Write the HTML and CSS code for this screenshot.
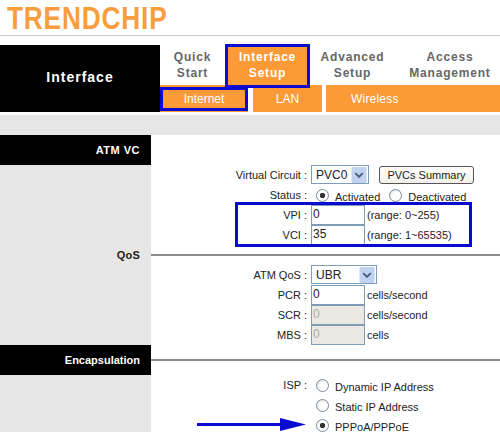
FILE: index.html
```html
<!DOCTYPE html>
<html lang="en">
<head>
  <meta charset="UTF-8">
  <title>TrendChip - Interface Setup</title>
  <link rel="stylesheet" href="styles.css">
</head>
<body>
  <div class="logo"><span class="logo-text">TRENDCHIP</span></div>

  <div class="header">
    <div class="brand">Interface</div>
    <div class="menu">
      <div class="tabs">
        <div class="tab tab-quick">Quick<br>Start</div>
        <div class="tab tab-on">Interface<br>Setup</div>
        <div class="tab tab-adv">Advanced<br>Setup</div>
        <div class="tab tab-access">Access<br>Management</div>
      </div>
      <div class="subtabs">
        <div class="sub sub-on">Internet</div>
        <div class="sub sub-lan">LAN</div>
        <div class="sub sub-wireless">Wireless</div>
      </div>
    </div>
  </div>

  <div class="band"></div>

  <form class="form">
    <div class="row head">
      <div class="side black atm">ATM VC</div>
      <div class="main"></div>
    </div>
    <div class="row">
      <div class="side"></div>
      <div class="label">Virtual Circuit :</div>
      <div class="ctl">
        <div class="select select-pvc">PVC0 <svg class="arrow" viewBox="0 0 16 17"><rect width="16" height="17" rx="1" fill="#c1d2ee"/><path d="M4 6.500l4 4 4-4" fill="none" stroke="#4d6185" stroke-width="2.200"/></svg></div>
        <button type="button" class="btn">PVCs Summary</button>
      </div>
    </div>
    <div class="row">
      <div class="side"></div>
      <div class="label">Status :</div>
      <div class="ctl">
        <input type="radio" class="radio" name="status" checked>
        <span class="opt">Activated</span>
        <input type="radio" class="radio radio-2" name="status">
        <span class="opt">Deactivated</span>
      </div>
    </div>
    <div class="row">
      <div class="side"></div>
      <div class="label">VPI :</div>
      <div class="ctl"><input type="text" class="field" value="0"><span class="unit">(range: 0~255)</span></div>
    </div>
    <div class="row">
      <div class="side"></div>
      <div class="label">VCI :</div>
      <div class="ctl"><input type="text" class="field" value="35"><span class="unit">(range: 1~65535)</span></div>
    </div>

    <div class="row">
      <div class="side qos">QoS</div>
      <div class="main"><div class="rule"></div></div>
    </div>
    <div class="row">
      <div class="side"></div>
      <div class="label">ATM QoS :</div>
      <div class="ctl">
        <div class="select select-qos">UBR <svg class="arrow" viewBox="0 0 16 17"><rect width="16" height="17" rx="1" fill="#c1d2ee"/><path d="M4 6.500l4 4 4-4" fill="none" stroke="#4d6185" stroke-width="2.200"/></svg></div>
      </div>
    </div>
    <div class="row">
      <div class="side"></div>
      <div class="label">PCR :</div>
      <div class="ctl"><input type="text" class="field" value="0"><span class="unit">cells/second</span></div>
    </div>
    <div class="row">
      <div class="side"></div>
      <div class="label">SCR :</div>
      <div class="ctl"><input type="text" class="field" value="0" disabled><span class="unit">cells/second</span></div>
    </div>
    <div class="row">
      <div class="side"></div>
      <div class="label">MBS :</div>
      <div class="ctl"><input type="text" class="field" value="0" disabled><span class="unit">cells</span></div>
    </div>

    <div class="row head">
      <div class="side black">Encapsulation</div>
      <div class="main"><div class="rule"></div></div>
    </div>
    <div class="row">
      <div class="side"></div>
      <div class="label">ISP :</div>
      <div class="ctl"><input type="radio" class="radio" name="isp"><span class="opt">Dynamic IP Address</span></div>
    </div>
    <div class="row">
      <div class="side"></div>
      <div class="label"></div>
      <div class="ctl"><input type="radio" class="radio" name="isp"><span class="opt">Static IP Address</span></div>
    </div>
    <div class="row">
      <div class="side"></div>
      <div class="label"></div>
      <div class="ctl"><input type="radio" class="radio" name="isp" checked><span class="opt">PPPoA/PPPoE</span></div>
    </div>
  </form>

  <!-- annotations drawn over the screenshot -->
  <div class="mark-box"></div>
  <svg class="mark-arrow" viewBox="0 0 110 14"><path d="M0 5H83V0L109 6.500 83 13V8H0z" fill="#0a0ad0"/></svg>
</body>
</html>
```

FILE: styles.css
```css
html, body {
  margin: 0;
  padding: 0;
  height: 432px;
  overflow: hidden;
}
body {
  position: relative;
  font-family: "Liberation Sans", Arial, sans-serif;
  font-size: 11px;
  color: #222;
  background: #fff;
}

.logo {
  height: 35px;
  border-bottom: 1px solid #ccc;
  margin-bottom: 9px;
  overflow: hidden;
}
.logo-text {
  display: block;
  margin: 1px 0 0 7px;
  font-size: 32px;
  line-height: 34px;
  font-weight: bold;
  letter-spacing: 1px;
  color: #f99d3e;
  transform: scaleX(.82);
  transform-origin: left;
}

.header {
  display: flex;
  height: 67px;
}
.brand {
  width: 160px;
  display: flex;
  align-items: center;
  justify-content: center;
  padding-bottom: 3px;
  box-sizing: border-box;
  background: #000;
  color: #fff;
  font-size: 14px;
  font-weight: bold;
  letter-spacing: 1px;
}
.menu {
  flex: 1;
}
.tabs {
  display: flex;
  height: 40px;
}
.tab {
  box-sizing: border-box;
  text-align: center;
  padding-top: 4px;
  font-size: 12px;
  line-height: 16px;
  font-weight: bold;
  letter-spacing: .8px;
  color: #666;
}
.tab-quick { width: 65px; }
.tab-adv { width: 85px; }
.tab-access { width: 105px; padding-left: 5px; }
.tab-on {
  position: relative;
  z-index: 1;
  width: 85px;
  height: 44px;
  margin-top: -1px;
  padding-top: 2px;
  background: #fb9a37;
  border: 3px solid #0a0ad0;
  color: #fff;
}
.subtabs {
  display: flex;
  height: 27px;
  background: #fb9a37;
  color: #fff;
  font-size: 12px;
}
.sub {
  box-sizing: border-box;
  display: flex;
  align-items: center;
  background: #fb9a37;
}
.sub-on {
  width: 88px;
  height: 24px;
  margin-top: 2px;
  justify-content: center;
  border: 3px solid #0a0ad0;
}
.sub-lan {
  width: 74px;
  justify-content: center;
  border-left: 5px solid #fff;
}
.sub-wireless {
  flex: 1;
  padding-left: 25px;
  letter-spacing: .2px;
  border-left: 4px solid #fff;
}

.band {
  height: 20px;
  margin-top: 3px;
  background: #e6e6e6;
}

.row {
  display: flex;
  height: 20px;
  align-items: stretch;
}
.row.head {
  height: 30px;
}
.side {
  width: 151px;
  box-sizing: border-box;
  padding-right: 11px;
  display: flex;
  align-items: center;
  justify-content: flex-end;
  background: #e6e6e6;
  font-weight: bold;
}
.side.black {
  background: #000;
  color: #fff;
}
.side.atm {
  letter-spacing: .5px;
}
.side.qos {
  color: #222;
  letter-spacing: .2px;
}
.main {
  flex: 1;
  display: flex;
  align-items: center;
}
.rule {
  flex: 1;
  height: 2px;
  background: #8c8c8c;
}
.label {
  width: 156px;
  display: flex;
  align-items: center;
  justify-content: flex-end;
  font-size: 11px;
}
.ctl {
  flex: 1;
  display: flex;
  align-items: center;
  margin-left: 4px;
  font-size: 11px;
}

.select {
  box-sizing: border-box;
  height: 19px;
  display: flex;
  align-items: center;
  justify-content: space-between;
  padding: 0 1px 0 4px;
  margin-bottom: 1px;
  border: 1px solid #7f9db9;
  background: #fff;
  font-size: 12px;
}
.select-pvc { width: 58px; }
.select-qos { width: 66px; }
.arrow {
  width: 16px;
  height: 16px;
}
.btn {
  box-sizing: border-box;
  width: 95px;
  height: 18px;
  margin-left: 10px;
  padding: 0;
  border: 1px solid #555;
  border-radius: 3px;
  background: linear-gradient(#fff, #f1f0e8);
  font-family: inherit;
  font-size: 11px;
  color: #222;
}
.field {
  box-sizing: border-box;
  width: 54px;
  height: 20px;
  margin: 0;
  padding: 0 0 3px 1px;
  border: 1px solid #7f9db9;
  border-radius: 0;
  font-family: inherit;
  font-size: 12px;
  color: #222;
  background: #fff;
}
.field:disabled {
  background: #ebe9e2;
  color: #aaa;
}
.unit {
  margin-left: 2px;
}
.radio {
  appearance: none;
  box-sizing: border-box;
  width: 13px;
  height: 13px;
  margin: 0 0 0 5px;
  border: 1px solid #7a8a99;
  border-radius: 50%;
  background: radial-gradient(circle at 65% 65%, #fff 45%, #d8d8d0);
}
.radio:checked {
  background: radial-gradient(circle, #333 0 2.500px, #fff 3px);
}
.radio-2 {
  margin-left: 9px;
}
.opt {
  margin: 4px 0 0 6px;
}

.mark-box {
  position: absolute;
  left: 235px;
  top: 202px;
  width: 231px;
  height: 39px;
  border: 3px solid #0a0ad0;
}
.mark-arrow {
  position: absolute;
  left: 197px;
  top: 418px;
  width: 110px;
  height: 14px;
}
```
